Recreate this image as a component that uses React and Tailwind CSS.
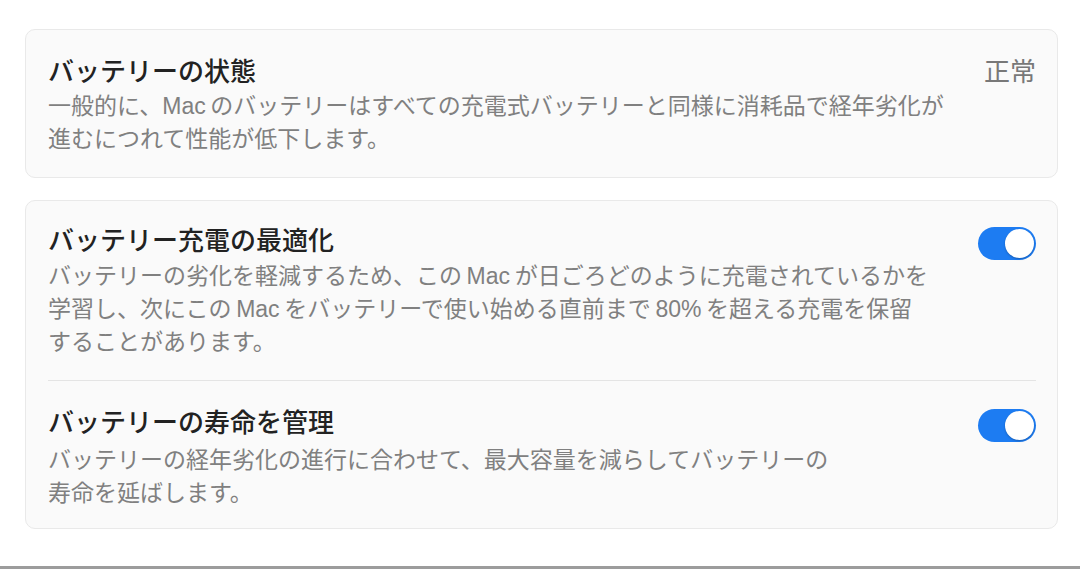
import { useState } from 'react'

const font = { fontFamily: '"Liberation Sans", "Noto Sans CJK JP", sans-serif' }

function Toggle({ on, onChange }) {
  return (
    <button
      onClick={() => onChange(!on)}
      className={`mt-[2px] flex h-[33px] w-[58px] shrink-0 items-center rounded-full p-[2px] ${on ? 'justify-end bg-[#1d7cf2]' : 'justify-start bg-[#e3e3e3]'}`}
    >
      <span className="h-[29px] w-[29px] rounded-full bg-white shadow-[0_1px_2px_rgba(0,0,0,0.25)]" />
    </button>
  )
}

function Title({ children }) {
  return <div className="text-[26px] font-medium leading-[32px] text-[#222]">{children}</div>
}

function Desc({ lines, className = '' }) {
  return (
    <div className={`text-[23px] leading-[33px] text-[#808080] ${className}`}>
      {lines.map(l => (
        <div key={l} className="whitespace-nowrap">{l}</div>
      ))}
    </div>
  )
}

export default function App() {
  const [optimize, setOptimize] = useState(true)
  const [manage, setManage] = useState(true)

  return (
    <div className="flex h-[569px] w-[1080px] flex-col bg-white" style={font}>
      <div className="flex flex-1 flex-col gap-[22px] pl-[25px] pr-[22px] pt-[29px]">
        {/* Battery condition */}
        <div className="flex justify-between rounded-[10px] border border-[#e9e9e9] bg-[#fafafa] pl-[22px] pr-[21px] pt-[26px] pb-[21px]">
          <div>
            <Title>バッテリーの状態</Title>
            <Desc
              className="mt-[2px] leading-[32px]"
              lines={[
                '一般的に、Mac\u2009のバッテリーはすべての充電式バッテリーと同様に消耗品で経年劣化が',
                '進むにつれて性能が低下します。',
              ]}
            />
          </div>
          <div className="text-[26px] leading-[32px] text-[#787878]">正常</div>
        </div>

        {/* Charging options */}
        <div className="rounded-[10px] border border-[#e9e9e9] bg-[#fafafa] pl-[22px] pr-[21px] pt-[24px] pb-[18px]">
          <div className="flex justify-between pb-[21px]">
            <div>
              <Title>バッテリー充電の最適化</Title>
              <Desc
                className="mt-[3px]"
                lines={[
                  'バッテリーの劣化を軽減するため、この\u2009Mac\u2009が日ごろどのように充電されているかを',
                  '学習し、次にこの\u2009Mac\u2009をバッテリーで使い始める直前まで\u200980%\u2009を超える充電を保留',
                  'することがあります。',
                ]}
              />
            </div>
            <Toggle on={optimize} onChange={setOptimize} />
          </div>
          <div className="h-px bg-[#e4e4e4]" />
          <div className="flex justify-between pt-[26px]">
            <div>
              <Title>バッテリーの寿命を管理</Title>
              <Desc
                className="mt-[5px]"
                lines={[
                  'バッテリーの経年劣化の進行に合わせて、最大容量を減らしてバッテリーの',
                  '寿命を延ばします。',
                ]}
              />
            </div>
            <Toggle on={manage} onChange={setManage} />
          </div>
        </div>
      </div>
      <div className="h-[3px] bg-[#9c9c9c]" />
    </div>
  )
}
